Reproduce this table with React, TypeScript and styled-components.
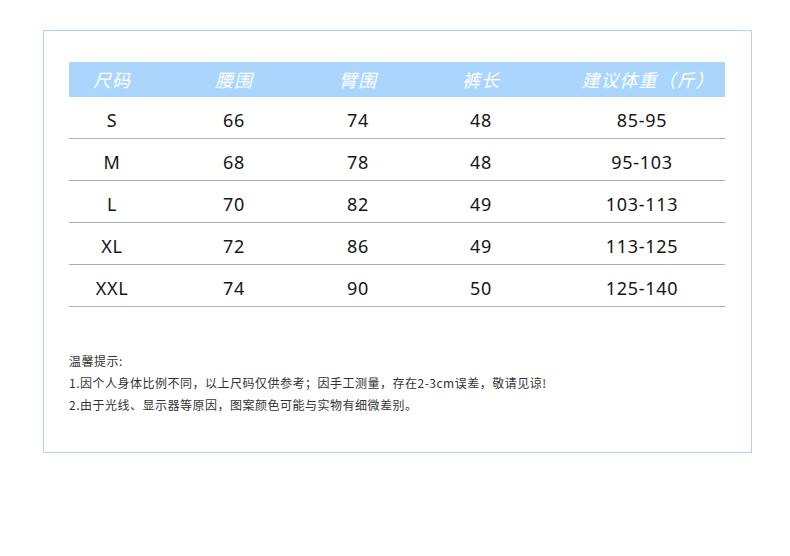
import React from "react";
import styled, { createGlobalStyle } from "styled-components";

const headers = ["尺码", "腰围", "臂围", "裤长", "建议体重（斤）"];

const rows = [
  ["S", "66", "74", "48", "85-95"],
  ["M", "68", "78", "48", "95-103"],
  ["L", "70", "82", "49", "103-113"],
  ["XL", "72", "86", "49", "113-125"],
  ["XXL", "74", "90", "50", "125-140"],
];

const notes = [
  "温馨提示:",
  "1.因个人身体比例不同，以上尺码仅供参考；因手工测量，存在2-3cm误差，敬请见谅!",
  "2.由于光线、显示器等原因，图案颜色可能与实物有细微差别。",
];

const GlobalStyle = createGlobalStyle`
  html, body {
    margin: 0;
    padding: 0;
    background: #ffffff;
  }
  body {
    font-family: "Noto Sans", "Noto Sans CJK SC", sans-serif;
  }
`;

const Page = styled.div`
  width: 790px;
  height: 556px;
  padding: 30px 0 0 43px;
  box-sizing: border-box;
`;

const Frame = styled.div`
  width: 709px;
  height: 423px;
  box-sizing: border-box;
  border: 1px solid #a9d4fb;
  padding: 31px 26px 0 25px;
`;

const Table = styled.div`
  width: 656px;
`;

const Row = styled.div<{ $head?: boolean }>`
  display: grid;
  grid-template-columns: 86px 158px 90px 156px 1fr;
  align-items: center;
  height: ${(p) => (p.$head ? "35px" : "41px")};
  background: ${(p) => (p.$head ? "#aad5fc" : "transparent")};
  border-bottom: ${(p) => (p.$head ? "none" : "1px solid #a6b1b9")};
`;

const HeadCell = styled.div<{ $shift?: number }>`
  text-align: center;
  color: #ffffff;
  font-family: "Noto Sans CJK SC", sans-serif;
  font-style: italic;
  font-weight: 400;
  font-size: 18px;
  letter-spacing: 1px;
  line-height: 35px;
  padding-left: ${(p) => p.$shift ?? 0}px;
`;

const Cell = styled.div`
  text-align: center;
  color: #151515;
  font-family: "Noto Sans", "Noto Sans CJK SC", sans-serif;
  font-size: 18px;
  letter-spacing: 0.7px;
  padding-top: 4px;
`;

const Notes = styled.div`
  margin-top: 43px;
  color: #333333;
  font-family: "Noto Sans CJK SC", sans-serif;
  font-size: 12px;
  letter-spacing: 0.5px;
  line-height: 22px;
`;

const App: React.FC = () => {
  return (
    <>
      <GlobalStyle />
      <Page>
        <Frame>
          <Table>
            <Row $head>
              {headers.map((h, i) => (
                <HeadCell key={h} $shift={i === 4 ? 12 : 0}>
                  {h}
                </HeadCell>
              ))}
            </Row>
            {rows.map((r) => (
              <Row key={r[0]}>
                {r.map((v, i) => (
                  <Cell key={i}>{v}</Cell>
                ))}
              </Row>
            ))}
          </Table>
          <Notes>
            {notes.map((n) => (
              <div key={n}>{n}</div>
            ))}
          </Notes>
        </Frame>
      </Page>
    </>
  );
};

export default App;
